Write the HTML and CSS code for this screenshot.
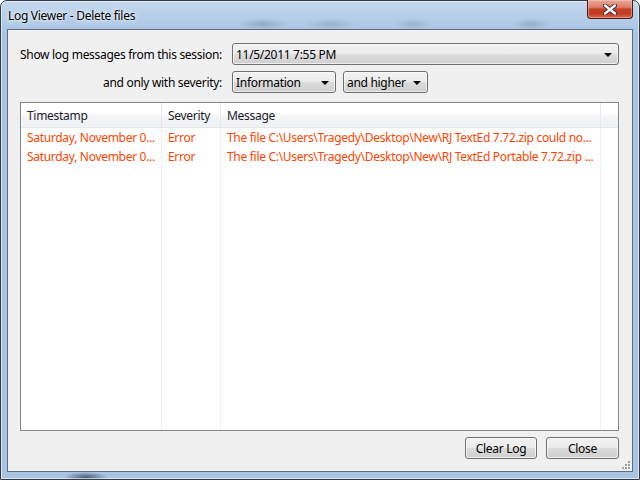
FILE: index.html
```html
<!DOCTYPE html>
<html>
<head>
<meta charset="utf-8">
<link rel="stylesheet" href="styles.css">
</head>
<body>
<div class="window">
  <div class="titlebar">
    <span class="title">Log Viewer - Delete files</span>
    <button class="close-btn" aria-label="Close">
      <svg width="14" height="11" viewBox="0 0 14 11">
        <path d="M2 1.5 L12 9.5 M12 1.5 L2 9.5" stroke="#3b2a2a" stroke-width="4.2" stroke-linecap="round"/>
        <path d="M2 1.5 L12 9.5 M12 1.5 L2 9.5" stroke="#ffffff" stroke-width="2.4" stroke-linecap="round"/>
      </svg>
    </button>
  </div>
  <div class="client">
    <div class="filters">
      <label class="flabel">Show log messages from this session:</label>
      <div class="combo combo-wide"><span>11/5/2011 7:55 PM</span><i class="arrow"></i></div>
      <label class="flabel">and only with severity:</label>
      <div class="combo-row">
        <div class="combo combo-sev"><span>Information</span><i class="arrow"></i></div>
        <div class="combo combo-cmp"><span>and higher</span><i class="arrow"></i></div>
      </div>
    </div>
    <div class="listview">
      <div class="lv-head">
        <div class="col c-ts">Timestamp</div>
        <div class="col c-sev">Severity</div>
        <div class="col c-msg">Message</div>
        <div class="col c-fill"></div>
      </div>
      <div class="lv-body">
        <div class="row">
          <div class="col c-ts">Saturday, November 0...</div>
          <div class="col c-sev">Error</div>
          <div class="col c-msg">The file C:\Users\Tragedy\Desktop\New\RJ TextEd 7.72.zip could no...</div>
          <div class="col c-fill"></div>
        </div>
        <div class="row">
          <div class="col c-ts">Saturday, November 0...</div>
          <div class="col c-sev">Error</div>
          <div class="col c-msg">The file C:\Users\Tragedy\Desktop\New\RJ TextEd Portable 7.72.zip ...</div>
          <div class="col c-fill"></div>
        </div>
        <div class="row row-rest">
          <div class="col c-ts"></div>
          <div class="col c-sev"></div>
          <div class="col c-msg"></div>
          <div class="col c-fill"></div>
        </div>
      </div>
    </div>
    <div class="buttons">
      <button class="btn btn-clear">Clear Log</button>
      <button class="btn btn-close">Close</button>
    </div>
    <div class="grip"></div>
  </div>
</div>
</body>
</html>
```
FILE: styles.css
```css
* { box-sizing: border-box; }
html, body { margin: 0; padding: 0; }
body {
  width: 640px;
  height: 480px;
  overflow: hidden;
  background: #ffffff;
  font-family: "Noto Sans", "Open Sans", sans-serif;
  font-size: 12px;
  letter-spacing: -0.3px;
}
.window {
  width: 640px;
  height: 480px;
  border: 1px solid #343c46;
  border-radius: 7px 7px 0 0;
  background:
    radial-gradient(ellipse 26px 6px at 262px 23px, rgba(70,90,120,0.28), transparent),
    radial-gradient(ellipse 26px 6px at 330px 23px, rgba(70,90,120,0.2), transparent),
    radial-gradient(ellipse 18px 6px at 412px 23px, rgba(70,90,120,0.2), transparent),
    radial-gradient(ellipse 18px 6px at 530px 23px, rgba(70,90,120,0.25), transparent),
    radial-gradient(ellipse 22px 5px at 85px 476px, rgba(20,30,50,0.6), transparent),
    linear-gradient(to bottom, #c5d8ee 0%, #aac6e4 6%, #a8c4e2 100%);
  padding: 0 6px 7px 6px;
  display: flex;
  flex-direction: column;
  position: relative;
  box-shadow: inset 0 0 0 1px rgba(255,255,255,0.55);
}
.titlebar {
  height: 28px;
  display: flex;
  align-items: flex-start;
  justify-content: space-between;
}
.title {
  margin-top: 6px;
  margin-left: 1px;
  color: #000;
  font-size: 12px;
  text-shadow: 0 0 6px rgba(255,255,255,0.95), 0 0 3px rgba(255,255,255,0.9);
}
.close-btn {
  width: 46px;
  height: 19px;
  margin-top: -1px;
  margin-right: 0;
  padding: 0;
  border: 1px solid #4a1a12;
  border-top: none;
  border-radius: 0 0 4px 4px;
  background: linear-gradient(to bottom, #e9a99a 0%, #dc7f66 40%, #c7412a 50%, #c23b22 75%, #d6684c 100%);
  box-shadow: inset 0 0 0 1px rgba(255,210,200,0.45);
  display: flex;
  align-items: center;
  justify-content: center;
}
.client {
  flex: 1;
  border: 1px solid #5e6e80;
  background: #f0f0f0;
  padding: 13px 13px 12px 12px;
  display: flex;
  flex-direction: column;
  position: relative;
}
.filters {
  display: grid;
  grid-template-columns: 202px 1fr;
  column-gap: 10px;
  row-gap: 6px;
  align-items: center;
}
.flabel {
  text-align: right;
  color: #000;
  white-space: nowrap;
  padding-top: 1px;
}
.combo-row { display: flex; gap: 7px; }
.combo {
  height: 22px;
  border: 1px solid #707070;
  border-radius: 3px;
  background: linear-gradient(to bottom, #f2f2f2 0%, #ebebeb 50%, #dddddd 50%, #cfcfcf 100%);
  box-shadow: inset 0 0 0 1px rgba(255,255,255,0.6);
  display: flex;
  align-items: center;
  padding: 0 6px 0 3px;
  color: #000;
}
.combo span { flex: 1; white-space: nowrap; }
.combo-wide { width: 387px; }
.combo-sev { width: 104px; }
.combo-cmp { width: 85px; }
.arrow {
  width: 0; height: 0;
  border-left: 4px solid transparent;
  border-right: 4px solid transparent;
  border-top: 4px solid #000;
  margin-top: 1px;
}
.listview {
  margin-top: 9px;
  flex: 1;
  border: 1px solid #828790;
  background: #fff;
  display: flex;
  flex-direction: column;
  overflow: hidden;
}
.lv-head {
  height: 25px;
  display: flex;
  background: linear-gradient(to bottom, #ffffff 0%, #ffffff 40%, #f3f4f6 60%, #f1f2f4 100%);
  border-bottom: 1px solid #e4e7eb;
}
.lv-head .col {
  display: flex;
  align-items: center;
  border-right: 1px solid #e3e8ee;
  color: #1a1a2a;
}
.col { padding-left: 6px; white-space: nowrap; }
.c-ts { width: 141px; }
.c-sev { width: 59px; }
.c-msg { width: 380px; }
.c-fill { flex: 1; }
.lv-head .c-fill { border-right: none; }
.lv-body { flex: 1; display: flex; flex-direction: column; }
.row { display: flex; height: 19px; }
.row .col {
  color: #ff4500;
  line-height: 19px;
  border-right: 1px solid #eef1f6;
}
.row .c-fill { border-right: none; }
.row-rest { flex: 1; height: auto; }
.buttons {
  margin-top: 6px;
  display: flex;
  justify-content: flex-end;
  gap: 9px;
}
.btn {
  height: 22px;
  border: 1px solid #707070;
  border-radius: 3px;
  background: linear-gradient(to bottom, #f2f2f2 0%, #ebebeb 50%, #dddddd 50%, #cfcfcf 100%);
  box-shadow: inset 0 0 0 1px rgba(255,255,255,0.7);
  font-family: inherit;
  font-size: 12px;
  letter-spacing: -0.3px;
  color: #000;
  padding: 0;
}
.btn-clear { width: 72px; }
.btn-close { width: 73px; }
.grip {
  position: absolute;
  right: 1px;
  bottom: 1px;
  width: 10px;
  height: 10px;
  background:
    radial-gradient(circle at 8px 2px, #a0a0a0 1px, transparent 1.2px),
    radial-gradient(circle at 5px 5px, #a0a0a0 1px, transparent 1.2px),
    radial-gradient(circle at 8px 5px, #a0a0a0 1px, transparent 1.2px),
    radial-gradient(circle at 2px 8px, #a0a0a0 1px, transparent 1.2px),
    radial-gradient(circle at 5px 8px, #a0a0a0 1px, transparent 1.2px),
    radial-gradient(circle at 8px 8px, #a0a0a0 1px, transparent 1.2px);
}
```
